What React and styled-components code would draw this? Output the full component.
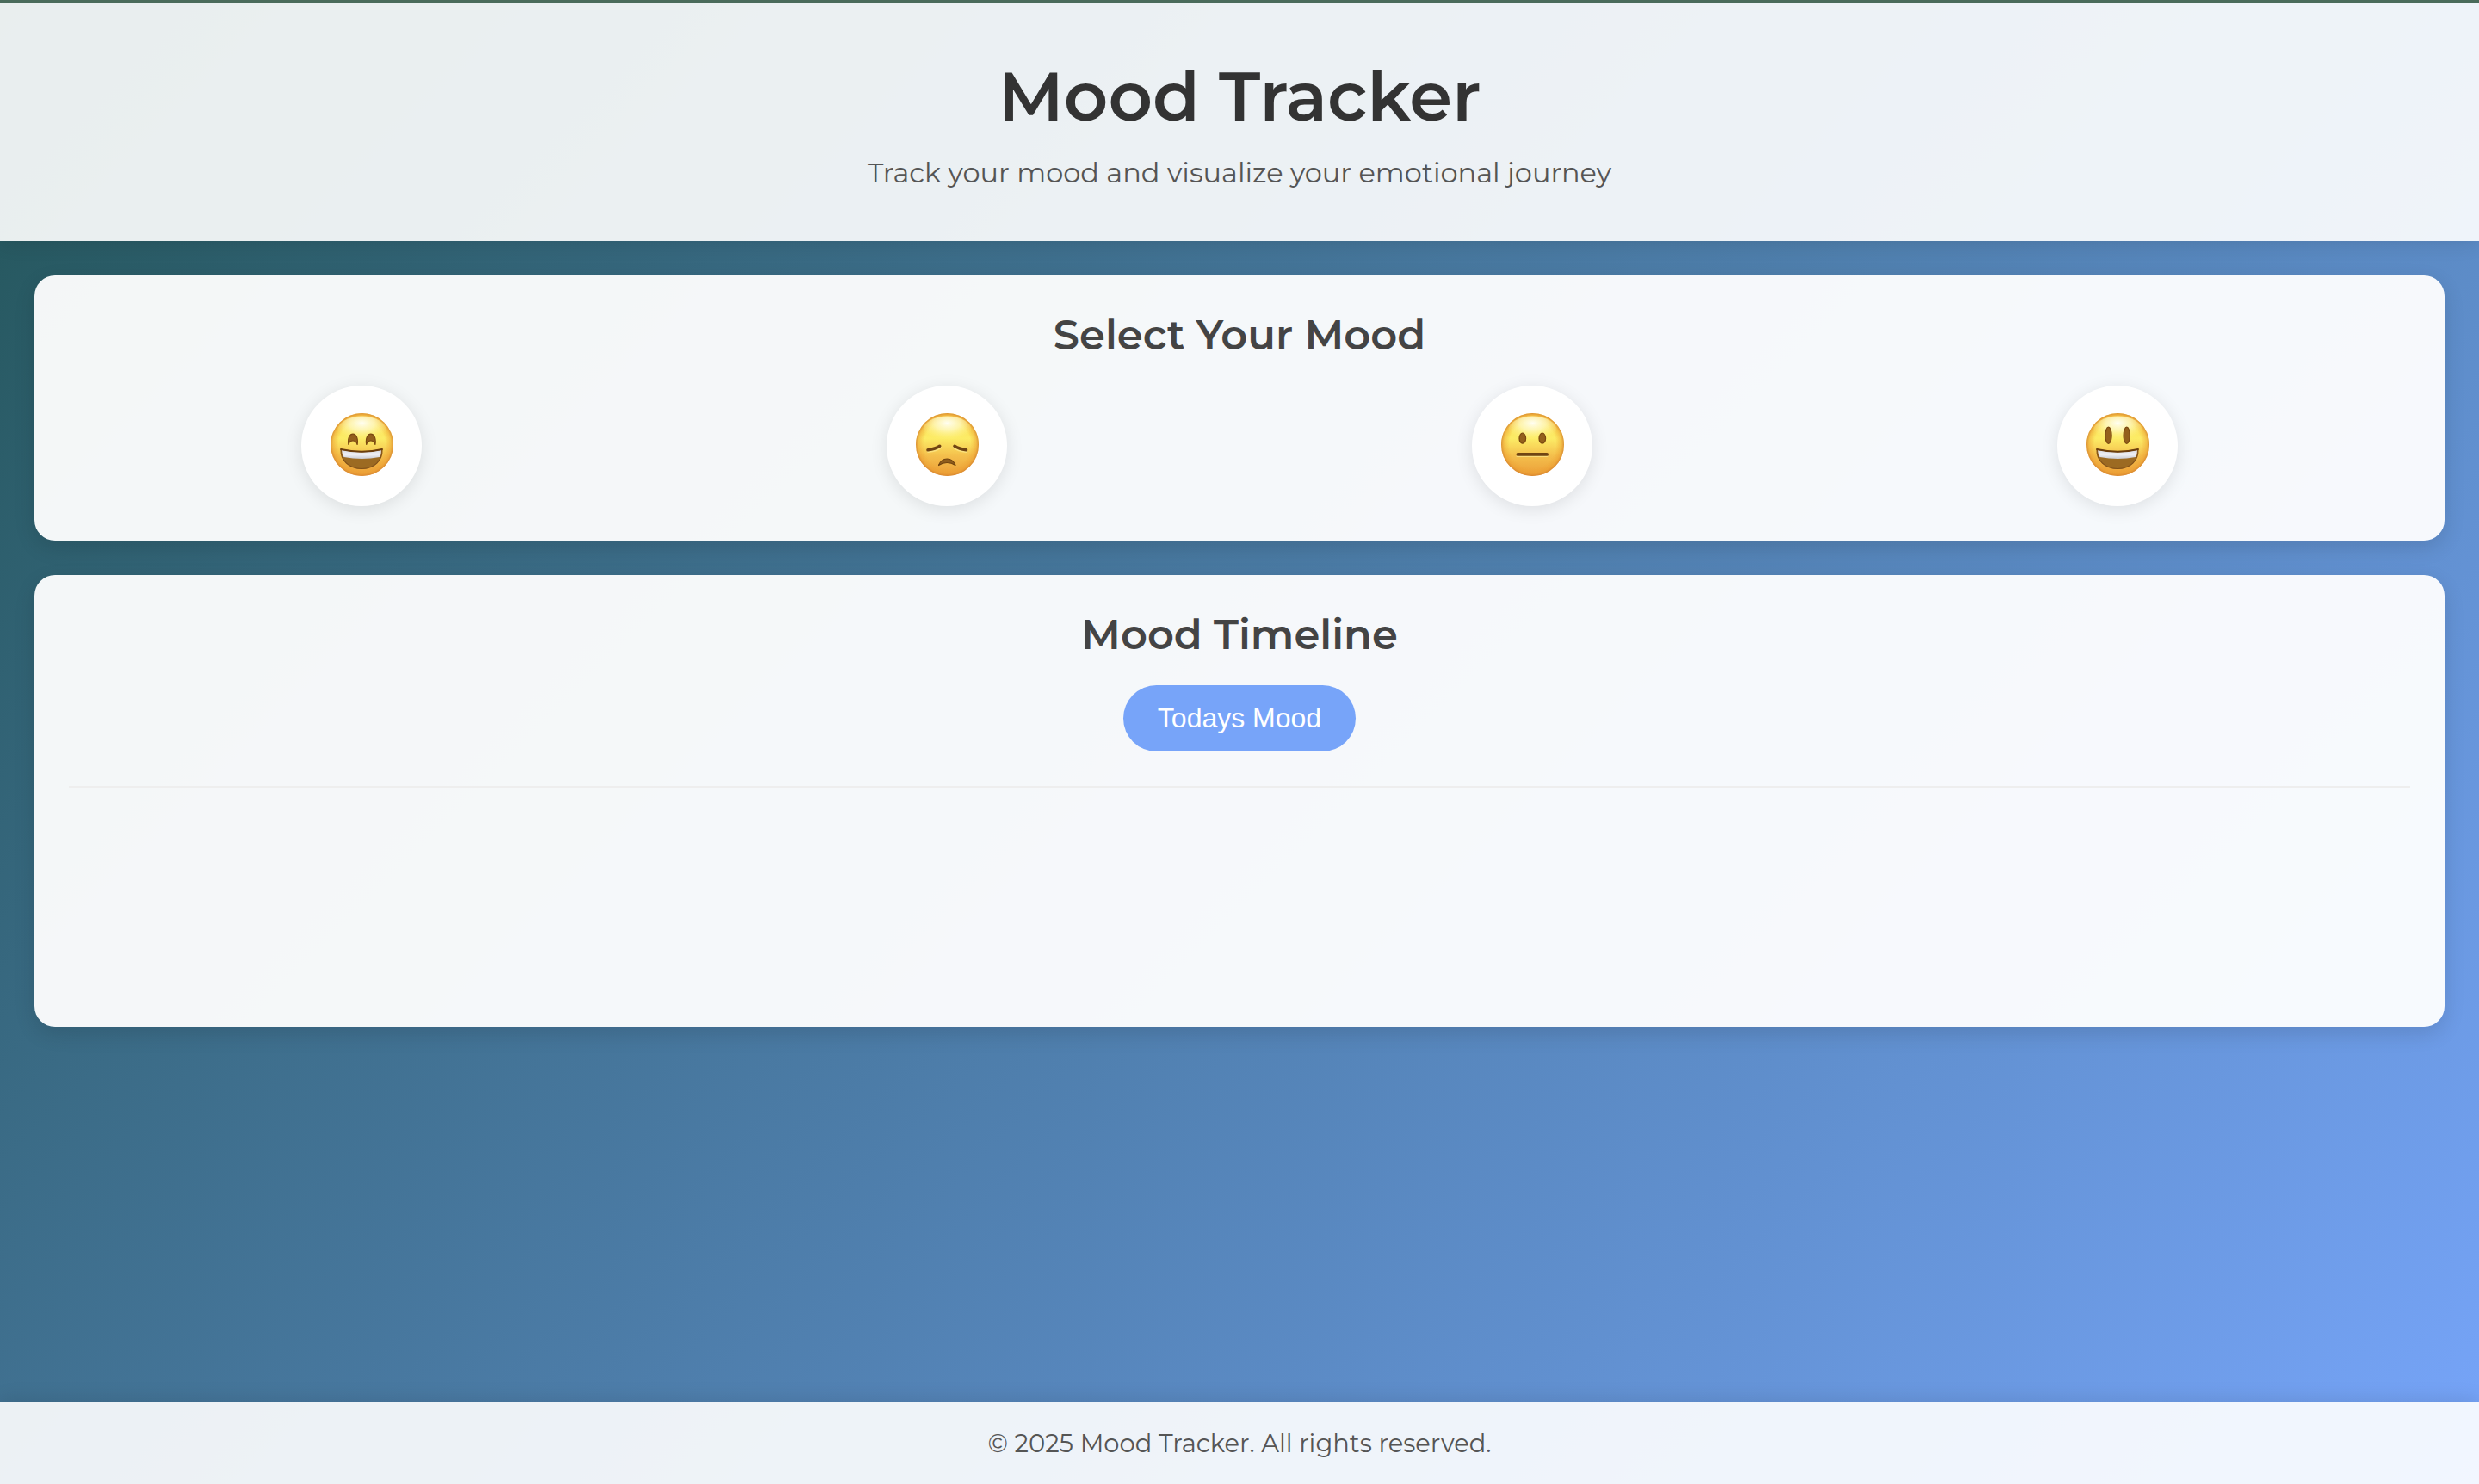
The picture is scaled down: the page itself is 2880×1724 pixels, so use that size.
import React, { useState } from 'react';
import styled, { createGlobalStyle } from 'styled-components';

const GlobalStyle = createGlobalStyle`
  *, *::before, *::after { box-sizing: border-box; }
  body {
    margin: 0;
    font-family: Montserrat, Inter, 'Open Sans', sans-serif;
    color: #333;
  }
`;

const Page = styled.div`
  min-height: 100vh;
  display: flex;
  flex-direction: column;
  background: linear-gradient(135deg, #225457, #77a5fa);
`;

const Header = styled.header`
  padding: 60px 40px 58px;
  border-top: 4px solid #4a6b5b;
  text-align: center;
  background: rgba(255, 255, 255, 0.9);
  background-clip: padding-box;
  box-shadow: 0 4px 20px rgba(0, 0, 0, 0.1);
`;

const Title = styled.h1`
  margin: 0 0 20px;
  font-size: 80px;
  line-height: 96px;
  font-weight: 600;
  color: #333;
`;

const Tagline = styled.p`
  margin: 0;
  font-size: 32px;
  line-height: 42px;
  color: #555;
`;

const Main = styled.main`
  flex: 1;
  display: flex;
  flex-direction: column;
  gap: 40px;
  padding: 40px;
`;

const Card = styled.section`
  padding: 40px;
  border-radius: 24px;
  text-align: center;
  background: rgba(255, 255, 255, 0.95);
  box-shadow: 0 8px 24px rgba(0, 0, 0, 0.12);
`;

const CardTitle = styled.h2`
  margin: 0 0 30px;
  font-size: 48px;
  line-height: 58px;
  font-weight: 600;
  color: #444;
`;

const MoodGrid = styled.div`
  display: grid;
  grid-template-columns: repeat(4, 1fr);
  justify-items: center;
`;

const MoodButton = styled.button`
  width: 140px;
  height: 140px;
  padding: 0 0 4px;
  display: flex;
  align-items: center;
  justify-content: center;
  border: none;
  border-radius: 50%;
  background: #fff;
  box-shadow: 0 4px 20px rgba(0, 0, 0, 0.1);
  cursor: pointer;
`;

const TodayButton = styled.button`
  display: block;
  margin: 0 auto 40px;
  padding: 20px 40px;
  border: none;
  border-radius: 40px;
  font-family: Arial, 'Liberation Sans', sans-serif;
  font-size: 32px;
  line-height: 37px;
  color: #fff;
  background: #77a4f9;
  cursor: pointer;
`;

const Timeline = styled.div`
  min-height: 240px;
  border-top: 2px solid #eee;
`;

const Footer = styled.footer`
  padding: 30px 40px;
  text-align: center;
  font-size: 29px;
  line-height: 35px;
  color: #555;
  background: rgba(255, 255, 255, 0.9);
  box-shadow: 0 -4px 20px rgba(0, 0, 0, 0.1);
`;

const Face = ({ id, children }) => (
  <svg width="73" height="73" viewBox="0 0 73 73" aria-hidden="true">
    <defs>
      <linearGradient id={`${id}-skin`} x1="0" y1="0" x2="0" y2="1">
        <stop offset="0" stopColor="#fbd64e" />
        <stop offset="0.4" stopColor="#fcec66" />
        <stop offset="0.68" stopColor="#f4bf4c" />
        <stop offset="1" stopColor="#eb9d38" />
      </linearGradient>
      <radialGradient id={`${id}-rim`} cx="0.5" cy="0.5" r="0.5">
        <stop offset="0.74" stopColor="#f0a52f" stopOpacity="0" />
        <stop offset="0.92" stopColor="#eb9c30" stopOpacity="0.5" />
        <stop offset="1" stopColor="#d4822f" stopOpacity="0.85" />
      </radialGradient>
      <radialGradient id={`${id}-shine`} cx="0.5" cy="0.25" r="0.6">
        <stop offset="0" stopColor="#fffef2" />
        <stop offset="0.45" stopColor="#fffbc8" stopOpacity="0.75" />
        <stop offset="1" stopColor="#fff68a" stopOpacity="0" />
      </radialGradient>
      <linearGradient id={`${id}-teeth`} x1="0" y1="0" x2="0" y2="1">
        <stop offset="0" stopColor="#d8d9e0" />
        <stop offset="0.5" stopColor="#f1f1f6" />
        <stop offset="1" stopColor="#c9cad2" />
      </linearGradient>
    </defs>
    <circle cx="36.5" cy="36.5" r="36.5" fill={`url(#${id}-skin)`} />
    <circle cx="36.5" cy="36.5" r="36.5" fill={`url(#${id}-rim)`} />
    <ellipse cx="36.5" cy="19.5" rx="28" ry="16" fill={`url(#${id}-shine)`} />
    {children}
  </svg>
);

const OpenMouth = ({ id }) => (
  <g>
    <path
      d="M12 42 Q36.5 47.5 60 42 C60.5 55 51 64.5 36.2 64.5 C21.500 64.5 11.500 55 12 42 Z"
      fill="#9c6a22"
      stroke="#80501a"
      strokeWidth="1.2"
      strokeLinejoin="round"
    />
    <path
      d="M13 43 Q36.5 47.8 59 43 Q59 48 57 51 Q36.5 55 15.5 51 Q13.3 48 13 43 Z"
      fill={`url(#${id}-teeth)`}
    />
    <path d="M12 42 Q36.5 47.5 60 42" fill="none" stroke="#6b3d0d" strokeWidth="1.8" strokeLinecap="round" />
  </g>
);

const GrinFace = () => (
  <Face id="grin">
    {[20, 40.8].map((x) => (
      <path
        key={x}
        transform={`translate(${x} 24)`}
        d="M0.9 12.5 C-1.8 -4 13.8 -4 11.1 12.5 C9.5 6.5 2.5 6.5 0.9 12.5 Z"
        fill="#94601c"
        stroke="#7a4810"
        strokeWidth="1.2"
        strokeLinejoin="round"
      />
    ))}
    <OpenMouth id="grin" />
  </Face>
);

const SadFace = () => (
  <Face id="sad">
    <g fill="none" strokeLinecap="round">
      <path d="M14.5 44.5 Q24 43.5 28.5 39.8" stroke="#fff09a" strokeWidth="3" opacity="0.6" />
      <path d="M58.5 44.5 Q49 43.5 44.5 39.8" stroke="#fff09a" strokeWidth="3" opacity="0.6" />
      <path d="M14 42.8 Q23 41.5 27.7 38.3" stroke="#704413" strokeWidth="3.6" />
      <path d="M58.5 42.8 Q50 41.5 45 38.3" stroke="#704413" strokeWidth="3.6" />
    </g>
    <path
      d="M26.5 60.5 Q29.5 53 36.2 53 Q43 53 46 60.5 Q41.5 57.5 36.2 57.5 Q31 57.5 26.5 60.5 Z"
      fill="#8f5d1d"
      stroke="#6f420f"
      strokeWidth="1.2"
      strokeLinejoin="round"
    />
  </Face>
);

const NeutralFace = () => (
  <Face id="neutral">
    <g fill="#94601c" stroke="#7a4810" strokeWidth="1.2">
      <ellipse cx="24.8" cy="29.2" rx="3.8" ry="6" />
      <ellipse cx="47.8" cy="29.2" rx="3.8" ry="6" />
    </g>
    <rect x="17.5" y="49" width="37" height="2" rx="1" fill="#fff09a" opacity="0.6" />
    <rect x="17.5" y="46" width="37.5" height="3.8" rx="1.9" fill="#704413" />
  </Face>
);

const HappyFace = () => (
  <Face id="happy">
    <g fill="#94601c" stroke="#7a4810" strokeWidth="1.2">
      <ellipse cx="25.5" cy="25.8" rx="3.6" ry="9.7" />
      <ellipse cx="46.7" cy="25.8" rx="3.6" ry="9.7" />
    </g>
    <OpenMouth id="happy" />
  </Face>
);

const moods = [
  { name: 'Happy', Icon: GrinFace },
  { name: 'Sad', Icon: SadFace },
  { name: 'Neutral', Icon: NeutralFace },
  { name: 'Excited', Icon: HappyFace },
];

export default function App() {
  const [, setMood] = useState(null);

  return (
    <>
      <GlobalStyle />
      <Page>
        <Header>
          <Title>Mood Tracker</Title>
          <Tagline>Track your mood and visualize your emotional journey</Tagline>
        </Header>
        <Main>
          <Card>
            <CardTitle>Select Your Mood</CardTitle>
            <MoodGrid>
              {moods.map(({ name, Icon }) => (
                <MoodButton key={name} type="button" aria-label={name} onClick={() => setMood(name)}>
                  <Icon />
                </MoodButton>
              ))}
            </MoodGrid>
          </Card>
          <Card>
            <CardTitle>Mood Timeline</CardTitle>
            <TodayButton type="button">Todays Mood</TodayButton>
            <Timeline />
          </Card>
        </Main>
        <Footer>© 2025 Mood Tracker. All rights reserved.</Footer>
      </Page>
    </>
  );
}
